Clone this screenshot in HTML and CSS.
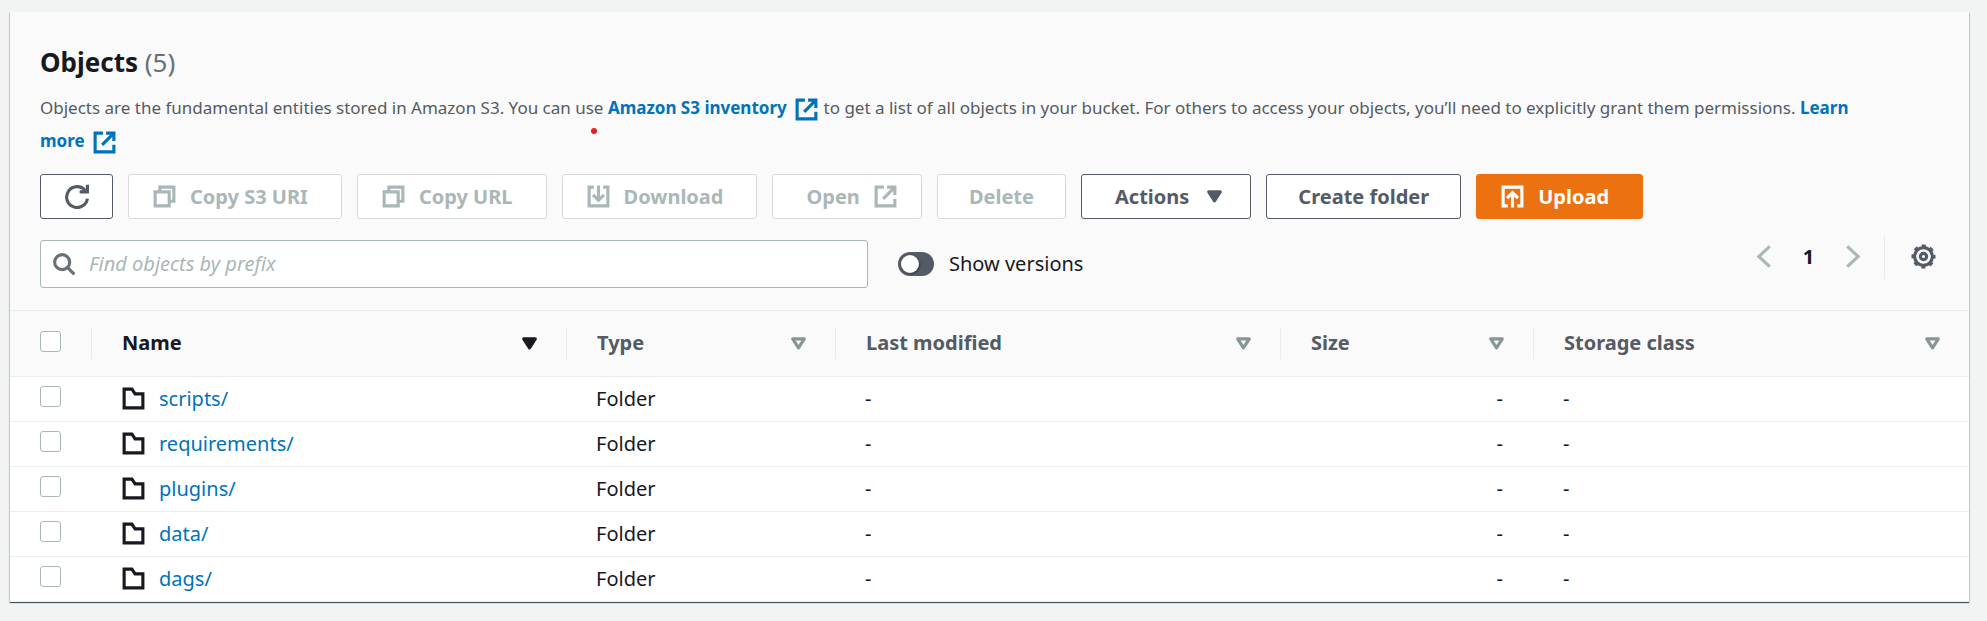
FILE: index.html
```html
<!DOCTYPE html>
<html lang="en">
<head>
<meta charset="utf-8">
<meta name="viewport" content="width=device-width, initial-scale=1">
<title>Objects</title>
<link rel="stylesheet" href="styles.css">
</head>
<body>
<svg class="sprite" aria-hidden="true">
  <symbol id="external" viewBox="0 0 16 16"><path d="M7 2H2v12h12V9.500M9 2h5v5M13.500 2.500L6.500 9.500"/></symbol>
  <symbol id="copy" viewBox="0 0 16 16"><path d="M2 5h9v9H2zM5 5V2h9v9h-3"/></symbol>
  <symbol id="download" viewBox="0 0 16 16"><path d="M5 2H2v12h12V2h-3M8 1v9.500M4.500 7L8 10.500 11.500 7"/></symbol>
  <symbol id="upload" viewBox="0 0 16 16"><path d="M5 14H2V2h12v12h-3M8 15V5.500M4.500 9L8 5.500 11.500 9"/></symbol>
  <symbol id="folder" viewBox="0 0 16 16"><path d="M2 2h5l2 3h5v9H2z"/></symbol>
  <symbol id="sort" viewBox="0 0 16 16"><path stroke-linejoin="round" d="M4.300 5h7.400L8 10.800z"/></symbol>
</svg>
<main class="card">
  <header class="card-header">
    <h2 class="title">Objects <span class="count">(5)</span></h2>
    <p class="description">Objects are the fundamental entities stored in Amazon S3. You can use <a href="#">Amazon S3 inventory <svg class="icon"><use href="#external"/></svg></a> to get a list of all objects in your bucket. For others to access your objects, you’ll need to explicitly grant them permissions. <a href="#">Learn <span class="keep">more <svg class="icon"><use href="#external"/></svg></span></a></p>
    <span class="marker"></span>
    <div class="actions">
      <button class="btn" type="button" aria-label="Refresh"><svg class="icon" viewBox="0 0 16 16"><path d="M15 9.500A6.700 6.700 0 1 1 13.500 4M15 .500V5H10"/></svg></button>
      <button class="btn" type="button" disabled><svg class="icon"><use href="#copy"/></svg>Copy S3 URI<i class="pad"></i></button>
      <button class="btn" type="button" disabled><svg class="icon"><use href="#copy"/></svg>Copy URL<i class="pad"></i></button>
      <button class="btn" type="button" disabled><svg class="icon"><use href="#download"/></svg>Download<i class="pad"></i></button>
      <button class="btn" type="button" disabled><i class="pad"></i>Open<svg class="icon"><use href="#external"/></svg></button>
      <button class="btn text-only" type="button" disabled>Delete</button>
      <button class="btn" type="button"><i class="pad"></i>Actions<svg class="icon solid"><use href="#sort"/></svg></button>
      <button class="btn text-only" type="button">Create folder</button>
      <button class="btn primary" type="button"><svg class="icon"><use href="#upload"/></svg>Upload<i class="pad"></i></button>
    </div>
    <div class="tools">
      <div class="search">
        <svg class="icon" viewBox="0 0 16 16"><circle cx="6.500" cy="6.500" r="4.800"/><path d="M10 10l4.300 4.300"/></svg>
        <input type="text" placeholder="Find objects by prefix" aria-label="Find objects by prefix">
      </div>
      <label class="switch"><input type="checkbox" role="switch">Show versions</label>
      <nav class="pages" aria-label="Pagination">
        <button class="page-btn" type="button" aria-label="Previous page"><svg class="icon" viewBox="0 0 16 16"><path d="M12 1.500L5 8l7 6.500"/></svg></button>
        <button class="page-btn current" type="button">1</button>
        <button class="page-btn" type="button" aria-label="Next page"><svg class="icon" viewBox="0 0 16 16"><path d="M4 1.500L11 8l-7 6.500"/></svg></button>
        <button class="page-btn settings" type="button" aria-label="Preferences"><svg class="icon" viewBox="0 0 16 16"><circle cx="8" cy="8" r="5.700"/><circle cx="8" cy="8" r="6.700" stroke-dasharray="2.600 2.662" stroke-dashoffset="1.300"/><circle cx="8" cy="8" r="2"/></svg></button>
      </nav>
    </div>
  </header>
  <table class="objects">
    <colgroup><col class="c-check"><col class="c-name"><col class="c-type"><col class="c-date"><col class="c-size"><col></colgroup>
    <thead>
      <tr>
        <th><input class="check" type="checkbox" aria-label="Select all"></th>
        <th class="sorted"><div class="head">Name<svg class="icon solid"><use href="#sort"/></svg></div></th>
        <th><div class="head">Type<svg class="icon"><use href="#sort"/></svg></div></th>
        <th><div class="head">Last modified<svg class="icon"><use href="#sort"/></svg></div></th>
        <th><div class="head">Size<svg class="icon"><use href="#sort"/></svg></div></th>
        <th><div class="head">Storage class<svg class="icon"><use href="#sort"/></svg></div></th>
      </tr>
    </thead>
    <tbody>
      <tr><td><input class="check" type="checkbox" aria-label="Select scripts/"></td><td><a class="object" href="#"><svg class="icon"><use href="#folder"/></svg>scripts/</a></td><td>Folder</td><td>-</td><td class="num">-</td><td>-</td></tr>
      <tr><td><input class="check" type="checkbox" aria-label="Select requirements/"></td><td><a class="object" href="#"><svg class="icon"><use href="#folder"/></svg>requirements/</a></td><td>Folder</td><td>-</td><td class="num">-</td><td>-</td></tr>
      <tr><td><input class="check" type="checkbox" aria-label="Select plugins/"></td><td><a class="object" href="#"><svg class="icon"><use href="#folder"/></svg>plugins/</a></td><td>Folder</td><td>-</td><td class="num">-</td><td>-</td></tr>
      <tr><td><input class="check" type="checkbox" aria-label="Select data/"></td><td><a class="object" href="#"><svg class="icon"><use href="#folder"/></svg>data/</a></td><td>Folder</td><td>-</td><td class="num">-</td><td>-</td></tr>
      <tr><td><input class="check" type="checkbox" aria-label="Select dags/"></td><td><a class="object" href="#"><svg class="icon"><use href="#folder"/></svg>dags/</a></td><td>Folder</td><td>-</td><td class="num">-</td><td>-</td></tr>
    </tbody>
  </table>
</main>
</body>
</html>
```

FILE: styles.css
```css
* {
  box-sizing: border-box;
}

body {
  margin: 0;
  padding: 12px 18px 19px 10px;
  background: #f2f3f3;
  color: #16191f;
  font: 20px/28px "Noto Sans", "Open Sans", sans-serif;
}

button,
input {
  font: inherit;
  color: inherit;
}

a {
  color: #0073bb;
  text-decoration: none;
}

.sprite {
  display: none;
}

.icon {
  flex: none;
  width: 25px;
  height: 25px;
  fill: none;
  stroke: currentColor;
  stroke-width: 2;
}

.icon.solid {
  fill: currentColor;
}

.card {
  background: #fff;
  box-shadow: 0 1px 1px #001c244d, 1px 1px 1px #001c2426, -1px 1px 1px #001c2426, 0 1px 0 #879596;
}

.card-header {
  position: relative;
  padding: 32px 30px 22px;
  background: #fafafa;
  border-bottom: 1px solid #eaeded;
}

.title {
  margin: 0;
  font-size: 26px;
  line-height: 36px;
}

.count {
  color: #687078;
  font-weight: 400;
}

.description {
  margin: 11px 0 0;
  padding-right: 50px;
  color: #545b64;
  font-size: 17px;
  line-height: 33px;
}

.description a {
  font-weight: 700;
}

.description .icon {
  margin-left: 3px;
  vertical-align: -8px;
}

.keep {
  white-space: nowrap;
}

.marker {
  position: absolute;
  top: 116px;
  left: 581px;
  width: 6px;
  height: 6px;
  border-radius: 50%;
  background: #ee1c1c;
}

.actions {
  display: flex;
  flex-wrap: wrap;
  gap: 15px;
  margin-top: 17px;
}

.btn {
  display: flex;
  align-items: center;
  gap: 13px;
  height: 45px;
  padding: 0 23px;
  border: 1px solid #545b64;
  border-radius: 3px;
  background: #fff;
  color: #545b64;
  font-weight: 700;
}

.btn:disabled {
  border-color: #d5dbdb;
  color: #aab7b8;
}

.btn.text-only {
  padding: 0 31px;
}

.btn.primary {
  border-color: #ec7211;
  background: #ec7211;
  color: #fff;
}

.pad {
  margin-left: -3px;
}

.tools {
  display: flex;
  align-items: flex-start;
  margin-top: 15px;
}

.search {
  display: flex;
  align-items: center;
  flex: 0 1 828px;
  gap: 12px;
  height: 48px;
  margin-top: 6px;
  padding: 0 11px;
  border: 1px solid #aab7b8;
  border-radius: 3px;
  background: #fff;
  color: #687078;
}

.search input {
  flex: 1;
  min-width: 0;
  padding: 0;
  border: 0;
  outline: 0;
  background: none;
}

.search input::placeholder {
  color: #aab7b8;
  font-style: italic;
  opacity: 1;
}

.switch {
  display: flex;
  align-items: center;
  gap: 15px;
  margin: 16px 0 0 30px;
}

.switch input {
  appearance: none;
  width: 36px;
  height: 24px;
  margin: 0;
  padding: 3px;
  border-radius: 12px;
  background: #545b64;
}

.switch input::before {
  content: "";
  display: block;
  width: 18px;
  height: 18px;
  border-radius: 50%;
  background: #fff;
  box-shadow: 1px 1px 2px #0006;
}

.pages {
  display: flex;
  align-items: center;
  height: 45px;
  margin: 0 3px 0 auto;
  color: #aab7b8;
}

.page-btn {
  display: flex;
  align-items: center;
  justify-content: center;
  width: 45px;
  height: 45px;
  padding: 0;
  border: 0;
  background: none;
}

.page-btn.current {
  color: #16191f;
  font-weight: 700;
}

.page-btn.settings {
  justify-content: flex-end;
  width: 52px;
  margin-left: 8px;
  border-left: 1px solid #eaeded;
  color: #545b64;
}

.objects {
  width: 100%;
  border-collapse: collapse;
  table-layout: fixed;
}

.c-check { width: 81px; }
.c-name { width: 475px; }
.c-type { width: 269px; }
.c-date { width: 445px; }
.c-size { width: 253px; }

th,
td {
  height: 45px;
  padding: 0 0 0 30px;
  border-bottom: 1px solid #eaeded;
  text-align: left;
}

td.num {
  padding-right: 30px;
  text-align: right;
}

th {
  height: 65px;
  background: #fafafa;
  color: #545b64;
}

th.sorted {
  color: #16191f;
}

th:not(:first-child) {
  padding-left: 0;
}

.head {
  display: flex;
  align-items: center;
  justify-content: space-between;
  height: 31px;
  padding: 0 24px 0 30px;
  border-left: 1px solid #eaeded;
}

.head .icon {
  color: #879596;
}

.head .icon.solid {
  color: #16191f;
}

.check {
  appearance: none;
  display: block;
  width: 21px;
  height: 21px;
  margin: 0 0 4px;
  border: 1px solid #aab7b8;
  border-radius: 3px;
  background: #fff;
}

.object {
  display: flex;
  align-items: center;
  gap: 13px;
}

.object .icon {
  color: #16191f;
}
```
